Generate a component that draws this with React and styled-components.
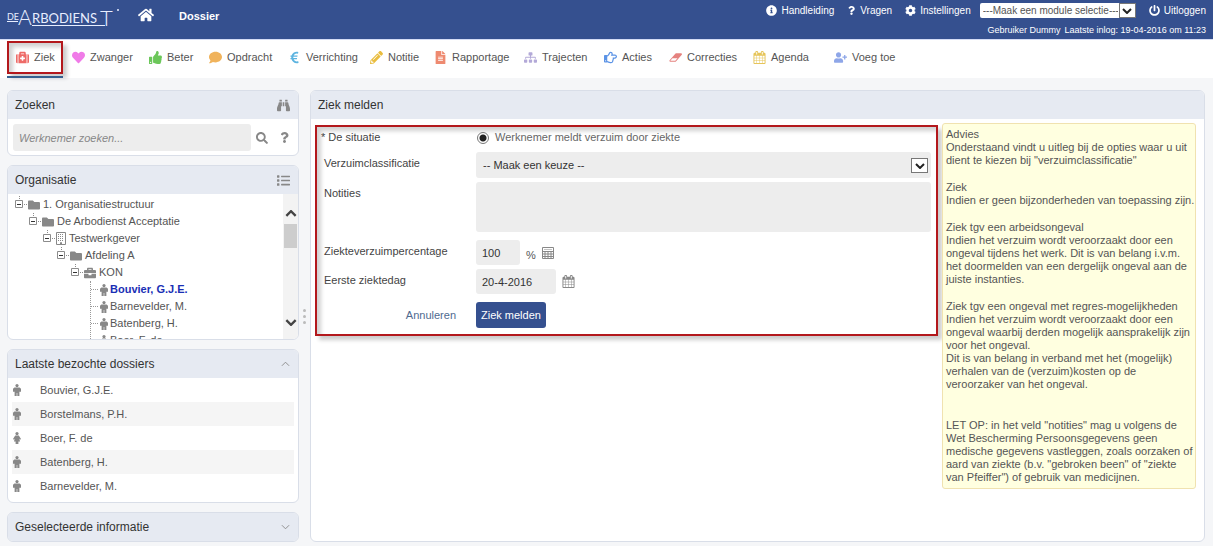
import { useState } from 'react';
import styled, { createGlobalStyle, css } from 'styled-components';
import {
  FaBinoculars,
  FaBriefcase,
  FaCog,
  FaComment,
  FaEuroSign,
  FaFileAlt,
  FaFolder,
  FaHeart,
  FaHome,
  FaInfoCircle,
  FaList,
  FaMedkit,
  FaPencilAlt,
  FaPowerOff,
  FaQuestion,
  FaRegHandPointRight,
  FaSearch,
  FaSitemap,
  FaThumbsUp,
  FaUserPlus,
} from 'react-icons/fa';

const CalendarIcon = ({ size, color }) => (
  <svg width={size} height={size} viewBox="0 0 1792 1792" fill={color || 'currentColor'} aria-hidden="true">
    <path d="M192 1664h288v-288h-288v288zm352 0h320v-288h-320v288zm-352-352h288v-320h-288v320zm352 0h320v-320h-320v320zm-352-384h288v-288h-288v288zm736 736h320v-288h-320v288zm-384-736h320v-288h-320v288zm768 736h288v-288h-288v288zm-384-352h320v-320h-320v320zm-352-864v-288q0-13-9.5-22.5t-22.5-9.5h-64q-13 0-22.5 9.5t-9.5 22.5v288q0 13 9.5 22.5t22.5 9.5h64q13 0 22.5-9.5t9.5-22.5zm736 864h288v-320h-288v320zm-384-384h320v-288h-320v288zm384 0h288v-288h-288v288zm32-480v-288q0-13-9.5-22.5t-22.5-9.5h-64q-13 0-22.5 9.5t-9.5 22.5v288q0 13 9.5 22.5t22.5 9.5h64q13 0 22.5-9.5t9.5-22.5zm384-64v1280q0 52-38 90t-90 38h-1408q-52 0-90-38t-38-90v-1280q0-52 38-90t90-38h128v-96q0-66 47-113t113-47h64q66 0 113 47t47 113v96h384v-96q0-66 47-113t113-47h64q66 0 113 47t47 113v96h128q52 0 90 38t38 90z" />
  </svg>
);

const EraserIcon = ({ size, color }) => (
  <svg width={size} height={size} viewBox="0 0 1984 1792" fill={color} aria-hidden="true">
    <path d="M960 1408l336-384h-768l-336 384h768zm1013-1077q15 34 9.5 71.5t-30.5 65.5l-896 1024q-38 44-96 44h-768q-38 0-69.5-20.5t-47.5-54.5q-15-34-9.5-71.5t30.5-65.5l896-1024q38-44 96-44h768q38 0 69.5 20.5t47.5 54.5z" />
  </svg>
);

const ManIcon = () => (
  <svg width="8" height="12" viewBox="0 0 8 12" fill="currentColor" aria-hidden="true">
    <circle cx="4" cy="1.6" r="1.6" />
    <path d="M1.4 3.4h5.2L8 4.8v3H6.4V12H4.3V9h-.6v3H1.6V7.8H0v-3z" />
  </svg>
);

const WomanIcon = () => (
  <svg width="8" height="12" viewBox="0 0 8 12" fill="currentColor" aria-hidden="true">
    <circle cx="4" cy="1.6" r="1.6" />
    <path d="M2.2 3.4h3.6L8 7l-1 .8-.9-1.3 1 2.9H5.4V12H2.6V9.4H.9l1-2.9L1 7.8 0 7z" />
  </svg>
);

const CalculatorIcon = () => (
  <svg width="12" height="12" viewBox="0 0 12 12" fill="none" stroke="currentColor" aria-hidden="true">
    <path d="M.5.5h11v11H.5zM.5 4.5h11M.5 7h11M.5 9.5h11M3 4.5v7M6 4.5v7M9 4.5v7" />
    <path d="M2 2.5h8" strokeOpacity=".5" />
  </svg>
);

const BuildingIcon = () => (
  <svg width="10" height="13" viewBox="0 0 10 13" fill="none" stroke="currentColor" aria-hidden="true">
    <path d="M.5.5h9v12h-9z" />
    <path d="M2 2.5h6M2 4.5h6M2 6.5h6M2 8.5h6" strokeDasharray="1 1" />
    <path d="M4.5 13v-2.5h1V13" />
  </svg>
);

const ToggleIcon = () => (
  <svg width="13" height="17" viewBox="0 0 13 17" fill="none" stroke="#8c8c8c" aria-hidden="true">
    <path d="M4.5 0v4M9 8.5h4" strokeDasharray="1 1" />
    <path d="M.5 4.5h7v7h-7z" />
    <path d="M2 8.5h4" stroke="#333" />
  </svg>
);

const Chevron = ({ down, width = 10, height = 6, weight = 1 }) => (
  <svg width={width} height={height} viewBox="0 0 10 6" fill="none" stroke="currentColor" strokeWidth={weight} aria-hidden="true">
    <path d={down ? 'M1 1l4 4 4-4' : 'M1 5l4-4 4 4'} />
  </svg>
);

const Logo = () => (
  <svg width="114" height="36" viewBox="0 0 114 36" fill="#e8eeff" role="img" aria-label="De Arbodienst">
    <g fontFamily="Lato, sans-serif">
      <text x="0" y="20" fontSize="9">DE</text>
      <text x="11" y="25" fontSize="21" fontWeight="300">A</text>
      <text x="25" y="23" fontSize="13">RBODIENS</text>
      <text x="93" y="26" fontSize="22" fontWeight="300">T</text>
    </g>
    <path d="M0 21.5h11M25 25.5h73" stroke="#e8eeff" />
    <circle cx="111" cy="10" r="1" />
  </svg>
);

const actions = [
  { label: 'Ziek', icon: FaMedkit, color: '#ee6a67', width: 56, active: true },
  { label: 'Zwanger', icon: FaHeart, color: '#f07be8', width: 77 },
  { label: 'Beter', icon: FaThumbsUp, color: '#6cc75a', width: 60 },
  { label: 'Opdracht', icon: FaComment, color: '#f0b35c', width: 79 },
  { label: 'Verrichting', icon: FaEuroSign, color: '#5db4e0', width: 82 },
  { label: 'Notitie', icon: FaPencilAlt, color: '#e9bd3f', width: 64 },
  { label: 'Rapportage', icon: FaFileAlt, color: '#ee8a70', width: 90 },
  { label: 'Trajecten', icon: FaSitemap, color: '#b3a9d8', width: 80 },
  { label: 'Acties', icon: FaRegHandPointRight, color: '#5b93e6', width: 65 },
  { label: 'Correcties', icon: EraserIcon, color: '#e5827f', width: 84 },
  { label: 'Agenda', icon: CalendarIcon, color: '#e6c55a', width: 81 },
  { label: 'Voeg toe', icon: FaUserPlus, color: '#8ea6e8', width: 72 },
];

const tree = [
  { label: '1. Organisatiestructuur', icon: FaFolder },
  { label: 'De Arbodienst Acceptatie', icon: FaFolder },
  { label: 'Testwerkgever', icon: BuildingIcon },
  { label: 'Afdeling A', icon: FaFolder },
  { label: 'KON', icon: FaBriefcase },
];

const employees = [
  { label: 'Bouvier, G.J.E.', icon: ManIcon, selected: true },
  { label: 'Barnevelder, M.', icon: ManIcon },
  { label: 'Batenberg, H.', icon: ManIcon },
  { label: 'Boer, F. de', icon: WomanIcon },
];

const recent = [
  { label: 'Bouvier, G.J.E.', icon: ManIcon },
  { label: 'Borstelmans, P.H.', icon: ManIcon },
  { label: 'Boer, F. de', icon: WomanIcon },
  { label: 'Batenberg, H.', icon: ManIcon },
  { label: 'Barnevelder, M.', icon: ManIcon },
];

export default function App() {
  const [search, setSearch] = useState('');
  const [notes, setNotes] = useState('');
  const [percentage, setPercentage] = useState('100');
  const [firstDay, setFirstDay] = useState('20-4-2016');

  return (
    <Page>
      <GlobalStyle />
      <Header>
        <Logo />
        <HomeLink href="#home" aria-label="Home">
          <FaHome size={16} />
        </HomeLink>
        <DossierLink href="#dossier">Dossier</DossierLink>
        <UserArea>
          <UserLinks>
            <UserLink href="#handleiding">
              <FaInfoCircle size={11} />
              Handleiding
            </UserLink>
            <UserLink href="#vragen">
              <FaQuestion size={9} />
              Vragen
            </UserLink>
            <UserLink href="#instellingen">
              <FaCog size={11} />
              Instellingen
            </UserLink>
            <ModuleBox>
              <ModuleSelect aria-label="Module">
                <option>---Maak een module selectie---</option>
              </ModuleSelect>
              <SelectArrow>
                <Chevron down weight={2} />
              </SelectArrow>
            </ModuleBox>
            <UserLink href="#uitloggen">
              <FaPowerOff size={11} />
              Uitloggen
            </UserLink>
          </UserLinks>
          <UserInfo>
            <span>Gebruiker Dummy</span>
            <span>Laatste inlog: 19-04-2016 om 11:23</span>
          </UserInfo>
        </UserArea>
      </Header>

      <Toolbar>
        {actions.map(({ label, icon: Icon, color, width, active }) => (
          <Action key={label} href={`#${label}`} $width={width} $active={active}>
            <Icon size={13} color={color} />
            {label}
          </Action>
        ))}
      </Toolbar>

      <Content>
        <Sidebar>
          <Panel>
            <PanelHeader>
              <PanelTitle>Zoeken</PanelTitle>
              <FaBinoculars size={13} />
            </PanelHeader>
            <SearchRow>
              <SearchInput
                type="text"
                aria-label="Werknemer zoeken"
                placeholder="Werknemer zoeken..."
                value={search}
                onChange={(e) => setSearch(e.target.value)}
              />
              <IconButton type="button" aria-label="Zoeken">
                <FaSearch size={12} />
              </IconButton>
              <IconButton type="button" aria-label="Help">
                <FaQuestion size={11} />
              </IconButton>
            </SearchRow>
          </Panel>

          <Panel>
            <PanelHeader>
              <PanelTitle>Organisatie</PanelTitle>
              <FaList size={13} />
            </PanelHeader>
            <TreeArea>
              <Tree>
                {tree.map(({ label, icon: Icon }, level) => (
                  <TreeRow key={label} $level={level}>
                    <ToggleIcon />
                    <Icon size={12} />
                    {label}
                  </TreeRow>
                ))}
                <Leaves>
                  {employees.map(({ label, icon: Icon, selected }) => (
                    <Leaf key={label} $selected={selected}>
                      <Icon />
                      {label}
                    </Leaf>
                  ))}
                </Leaves>
              </Tree>
              <Scrollbar>
                <Chevron width={12} height={7} weight={2} />
                <Thumb />
                <Chevron down width={12} height={7} weight={2} />
              </Scrollbar>
            </TreeArea>
          </Panel>

          <Panel>
            <PanelHeader>
              <PanelTitle>Laatste bezochte dossiers</PanelTitle>
              <Chevron width={9} height={6} />
            </PanelHeader>
            <RecentList>
              {recent.map(({ label, icon: Icon }) => (
                <RecentItem key={label}>
                  <Icon />
                  {label}
                </RecentItem>
              ))}
            </RecentList>
          </Panel>

          <Panel>
            <PanelHeader>
              <PanelTitle>Geselecteerde informatie</PanelTitle>
              <Chevron down width={9} height={6} />
            </PanelHeader>
          </Panel>
        </Sidebar>

        <Splitter>
          <Dot />
          <Dot />
          <Dot />
        </Splitter>

        <Panel>
          <PanelHeader>
            <PanelTitle>Ziek melden</PanelTitle>
          </PanelHeader>
          <MainBody>
            <Form onSubmit={(e) => e.preventDefault()}>
              <Situation>
                <Legend>* De situatie</Legend>
                <RadioLabel>
                  <Radio type="radio" name="situatie" defaultChecked />
                  Werknemer meldt verzuim door ziekte
                </RadioLabel>
              </Situation>
              <Field $height={30}>
                <Label htmlFor="classificatie">Verzuimclassificatie</Label>
                <SelectBox>
                  <Select id="classificatie">
                    <option>-- Maak een keuze --</option>
                  </Select>
                  <SelectArrow $boxed>
                    <Chevron down weight={2} />
                  </SelectArrow>
                </SelectBox>
              </Field>
              <Field $height={58}>
                <Label htmlFor="notities">Notities</Label>
                <TextArea id="notities" value={notes} onChange={(e) => setNotes(e.target.value)} />
              </Field>
              <Field $height={29}>
                <Label htmlFor="percentage">Ziekteverzuimpercentage</Label>
                <Inline>
                  <Input
                    id="percentage"
                    type="text"
                    $width={44}
                    value={percentage}
                    onChange={(e) => setPercentage(e.target.value)}
                  />
                  <Unit>%</Unit>
                  <IconButton type="button" aria-label="Rekenmachine">
                    <CalculatorIcon />
                  </IconButton>
                </Inline>
              </Field>
              <Field $height={33}>
                <Label htmlFor="ziektedag">Eerste ziektedag</Label>
                <Inline>
                  <Input
                    id="ziektedag"
                    type="text"
                    $width={80}
                    value={firstDay}
                    onChange={(e) => setFirstDay(e.target.value)}
                  />
                  <IconButton type="button" aria-label="Kalender">
                    <CalendarIcon size={13} />
                  </IconButton>
                </Inline>
              </Field>
              <Field $height={26}>
                <CancelLink href="#annuleren">Annuleren</CancelLink>
                <SubmitButton type="submit">Ziek melden</SubmitButton>
              </Field>
            </Form>
            <Advice>
              <p>
                Advies
                <br />
                Onderstaand vindt u uitleg bij de opties waar u uit dient te kiezen bij "verzuimclassificatie"
              </p>
              <p>
                Ziek
                <br />
                Indien er geen bijzonderheden van toepassing zijn.
              </p>
              <p>
                Ziek tgv een arbeidsongeval
                <br />
                Indien het verzuim wordt veroorzaakt door een ongeval tijdens het werk. Dit is van belang
                i.v.m. het doormelden van een dergelijk ongeval aan de juiste instanties.
              </p>
              <p>
                Ziek tgv een ongeval met regres-mogelijkheden
                <br />
                Indien het verzuim wordt veroorzaakt door een ongeval waarbij derden mogelijk aansprakelijk
                zijn voor het ongeval.
                <br />
                Dit is van belang in verband met het (mogelijk) verhalen van de (verzuim)kosten op de
                veroorzaker van het ongeval.
              </p>
              <Warning>
                LET OP: in het veld "notities" mag u volgens de Wet Bescherming Persoonsgegevens geen
                medische gegevens vastleggen, zoals oorzaken of aard van ziekte (b.v. "gebroken been" of
                "ziekte van Pfeiffer") of gebruik van medicijnen.
              </Warning>
            </Advice>
          </MainBody>
        </Panel>
      </Content>
    </Page>
  );
}

const GlobalStyle = createGlobalStyle`
  * {
    box-sizing: border-box;
  }
  body {
    margin: 0;
    background-color: #f5f6f8;
    color: #555;
    font-family: 'Liberation Sans', Arial, sans-serif;
    font-size: 11px;
    line-height: 13px;
  }
  a {
    text-decoration: none;
  }
  input, select, textarea, button {
    font: inherit;
    color: inherit;
  }
  svg {
    flex: none;
  }
`;

const highlight = css`
  border: 2px solid #b3181c;
  box-shadow: 4px 4px 4px rgba(0, 0, 0, 0.2), inset 4px 4px 4px rgba(0, 0, 0, 0.18);
`;

const Page = styled.div`
  display: flex;
  flex-direction: column;
  min-height: 100vh;
`;

const Header = styled.header`
  display: flex;
  height: 40px;
  padding: 0 7px;
  background-color: #35508f;
  border-bottom: 1px solid #d5dcf5;
  color: white;
`;

const HomeLink = styled.a`
  margin: 7px 0 0 17px;
  color: white;
`;

const DossierLink = styled.a`
  margin: 10px 0 0 25px;
  color: white;
  font-weight: bold;
`;

const UserArea = styled.div`
  display: flex;
  flex-direction: column;
  align-items: flex-end;
  gap: 6px;
  margin-left: auto;
  padding-top: 3px;
`;

const UserLinks = styled.nav`
  display: flex;
  align-items: center;
  gap: 13px;
  font-size: 10px;
`;

const UserLink = styled.a`
  display: flex;
  align-items: center;
  gap: 4px;
  color: white;
`;

const UserInfo = styled.div`
  display: flex;
  gap: 4px;
  font-size: 9px;
`;

const ModuleBox = styled.div`
  position: relative;
  width: 156px;
  height: 15px;
  margin-left: -4px;
`;

const ModuleSelect = styled.select`
  display: block;
  width: 100%;
  height: 15px;
  padding: 0 18px 0 3px;
  border: none;
  border-radius: 2px;
  background-color: white;
  color: #555;
  appearance: none;
`;

/* sits over the right end of a select */
const SelectArrow = styled.span`
  position: absolute;
  top: ${(props) => (props.$boxed ? '6px' : '0')};
  right: ${(props) => (props.$boxed ? '3px' : '0')};
  display: flex;
  align-items: center;
  justify-content: center;
  width: 17px;
  height: 15px;
  border: 1px solid #777;
  background-color: white;
  color: #222;
  pointer-events: none;
`;

const Toolbar = styled.nav`
  display: flex;
  height: 38px;
  padding: 1px 7px 0;
  background-color: white;
`;

const Action = styled.a`
  display: flex;
  align-items: center;
  gap: 5px;
  width: ${(props) => props.$width}px;
  height: 33px;
  padding-left: 9px;
  color: #555;
  white-space: nowrap;

  ${(props) =>
    props.$active &&
    css`
      ${highlight}
      position: relative;
      padding-left: 7px;

      &::after {
        content: '';
        position: absolute;
        left: -2px;
        right: -2px;
        bottom: -6px;
        height: 2px;
        background-color: #35608f;
      }
    `}
`;

const Content = styled.main`
  display: grid;
  flex: 1;
  grid-template-columns: 292px 11px 1fr;
  padding: 12px 8px 4px 7px;
`;

const Sidebar = styled.aside`
  display: flex;
  flex-direction: column;
  gap: 9px;
`;

const Panel = styled.section`
  border: 1px solid #d9dee8;
  border-radius: 6px;
  background-color: white;
  overflow: hidden;
`;

const PanelHeader = styled.div`
  display: flex;
  align-items: center;
  justify-content: space-between;
  height: 28px;
  padding: 0 8px 0 7px;
  background-color: #e6eaf2;
  color: #888;
`;

const PanelTitle = styled.h2`
  margin: 0;
  color: #333;
  font-size: 12px;
  font-weight: normal;
`;

const SearchRow = styled.div`
  display: flex;
  align-items: center;
  gap: 11px;
  padding: 5px 8px 4px 5px;
`;

const SearchInput = styled.input`
  flex: 1;
  min-width: 0;
  height: 27px;
  margin-right: -6px;
  padding: 0 6px;
  border: none;
  border-radius: 3px;
  background-color: #ededed;

  &::placeholder {
    color: #888;
    font-style: italic;
  }
`;

const IconButton = styled.button`
  display: flex;
  padding: 0;
  border: none;
  background: none;
  color: #888;
  cursor: pointer;
`;

const TreeArea = styled.div`
  display: flex;
  height: 145px;
  overflow: hidden;
`;

const Tree = styled.div`
  flex: 1;
  padding: 2px 0 0 7px;
`;

const TreeRow = styled.div`
  display: flex;
  align-items: center;
  gap: 3px;
  height: 17px;
  margin-left: ${(props) => props.$level * 14}px;
  white-space: nowrap;

  & > svg {
    color: #888;
  }
  & > svg:first-child {
    margin-right: -3px;
  }
`;

const Leaves = styled.div`
  margin-left: 75px;
  border-left: 1px dotted #999;
`;

const Leaf = styled.div`
  display: flex;
  align-items: center;
  gap: 2px;
  height: 17px;
  color: ${(props) => (props.$selected ? '#1a2fb5' : '#555')};
  font-weight: ${(props) => (props.$selected ? 'bold' : 'normal')};

  &::before {
    content: '';
    width: 7px;
    border-top: 1px dotted #999;
  }
  & > svg {
    color: #888;
  }
`;

const Scrollbar = styled.div`
  display: flex;
  flex-direction: column;
  align-items: center;
  width: 15px;
  padding: 16px 0 13px;
  background-color: #f3f3f3;
  color: #444;

  & > svg:last-child {
    margin-top: auto;
  }
`;

const Thumb = styled.div`
  width: 13px;
  height: 24px;
  margin-top: 7px;
  background-color: #cdcdcd;
`;

const RecentList = styled.ul`
  margin: 0;
  padding: 0 4px 4px;
  list-style: none;
`;

const RecentItem = styled.li`
  display: grid;
  grid-template-columns: 27px 1fr;
  align-items: center;
  height: 24px;
  padding-left: 1px;

  &:nth-child(even) {
    background-color: #f5f5f5;
  }
  & > svg {
    color: #888;
  }
`;

const Splitter = styled.div`
  display: flex;
  flex-direction: column;
  align-items: center;
  justify-content: center;
  gap: 3px;
`;

const Dot = styled.span`
  width: 3px;
  height: 3px;
  border-radius: 50%;
  background-color: #bbb;
`;

const MainBody = styled.div`
  display: flex;
  align-items: flex-start;
  gap: 4px;
  padding: 4px 8px 8px 4px;
`;

const Form = styled.form`
  ${highlight}
  flex: 1;
  margin-top: 2px;
  padding: 4px 5px 6px 7px;
`;

const Field = styled.div`
  display: grid;
  grid-template-columns: 152px 1fr;
  align-items: start;
  height: ${(props) => props.$height}px;
`;

const Situation = styled.div`
  display: grid;
  grid-template-columns: 155px 1fr;
  height: 21px;
  margin-left: -3px;
`;

const Legend = styled.span`
  color: #444;
`;

const Label = styled.label`
  padding-top: 5px;
  color: #444;
`;

const RadioLabel = styled.label`
  display: flex;
  align-items: center;
  align-self: start;
  gap: 6px;
  color: #666;
`;

const Radio = styled.input`
  width: 12px;
  height: 12px;
  margin: 0 0 0 1px;
  border: 1px solid #777;
  border-radius: 50%;
  background: radial-gradient(circle, #222 0 3px, white 4px);
  appearance: none;
`;

const SelectBox = styled.div`
  position: relative;
`;

const field = css`
  border: none;
  border-radius: 3px;
  background-color: #ededed;
  color: #333;
`;

const Select = styled.select`
  ${field}
  display: block;
  width: 100%;
  height: 26px;
  padding: 0 24px 0 7px;
  appearance: none;
`;

const TextArea = styled.textarea`
  ${field}
  display: block;
  width: 100%;
  height: 50px;
  padding: 6px 8px;
  resize: none;
`;

const Inline = styled.div`
  display: flex;
  align-items: center;
  gap: 6px;
`;

const Input = styled.input`
  ${field}
  width: ${(props) => props.$width}px;
  height: 25px;
  padding: 0 6px;
`;

const Unit = styled.span`
  padding-top: 5px;
`;

const CancelLink = styled.a`
  padding: 7px 20px 0 0;
  color: #4f6a8f;
  text-align: right;
`;

const SubmitButton = styled.button`
  justify-self: start;
  height: 26px;
  padding: 0 5px;
  border: none;
  border-radius: 3px;
  background-color: #35508f;
  color: white;
  cursor: pointer;
`;

const Advice = styled.aside`
  width: 254px;
  padding: 4px 0 4px 3px;
  border: 1px solid #f0e2b0;
  border-radius: 3px;
  background-color: #ffffe0;

  p {
    margin: 0;
  }
  p + p {
    margin-top: 14px;
  }
`;

const Warning = styled.p`
  ${Advice} p + && {
    margin-top: 28px;
  }
`;
